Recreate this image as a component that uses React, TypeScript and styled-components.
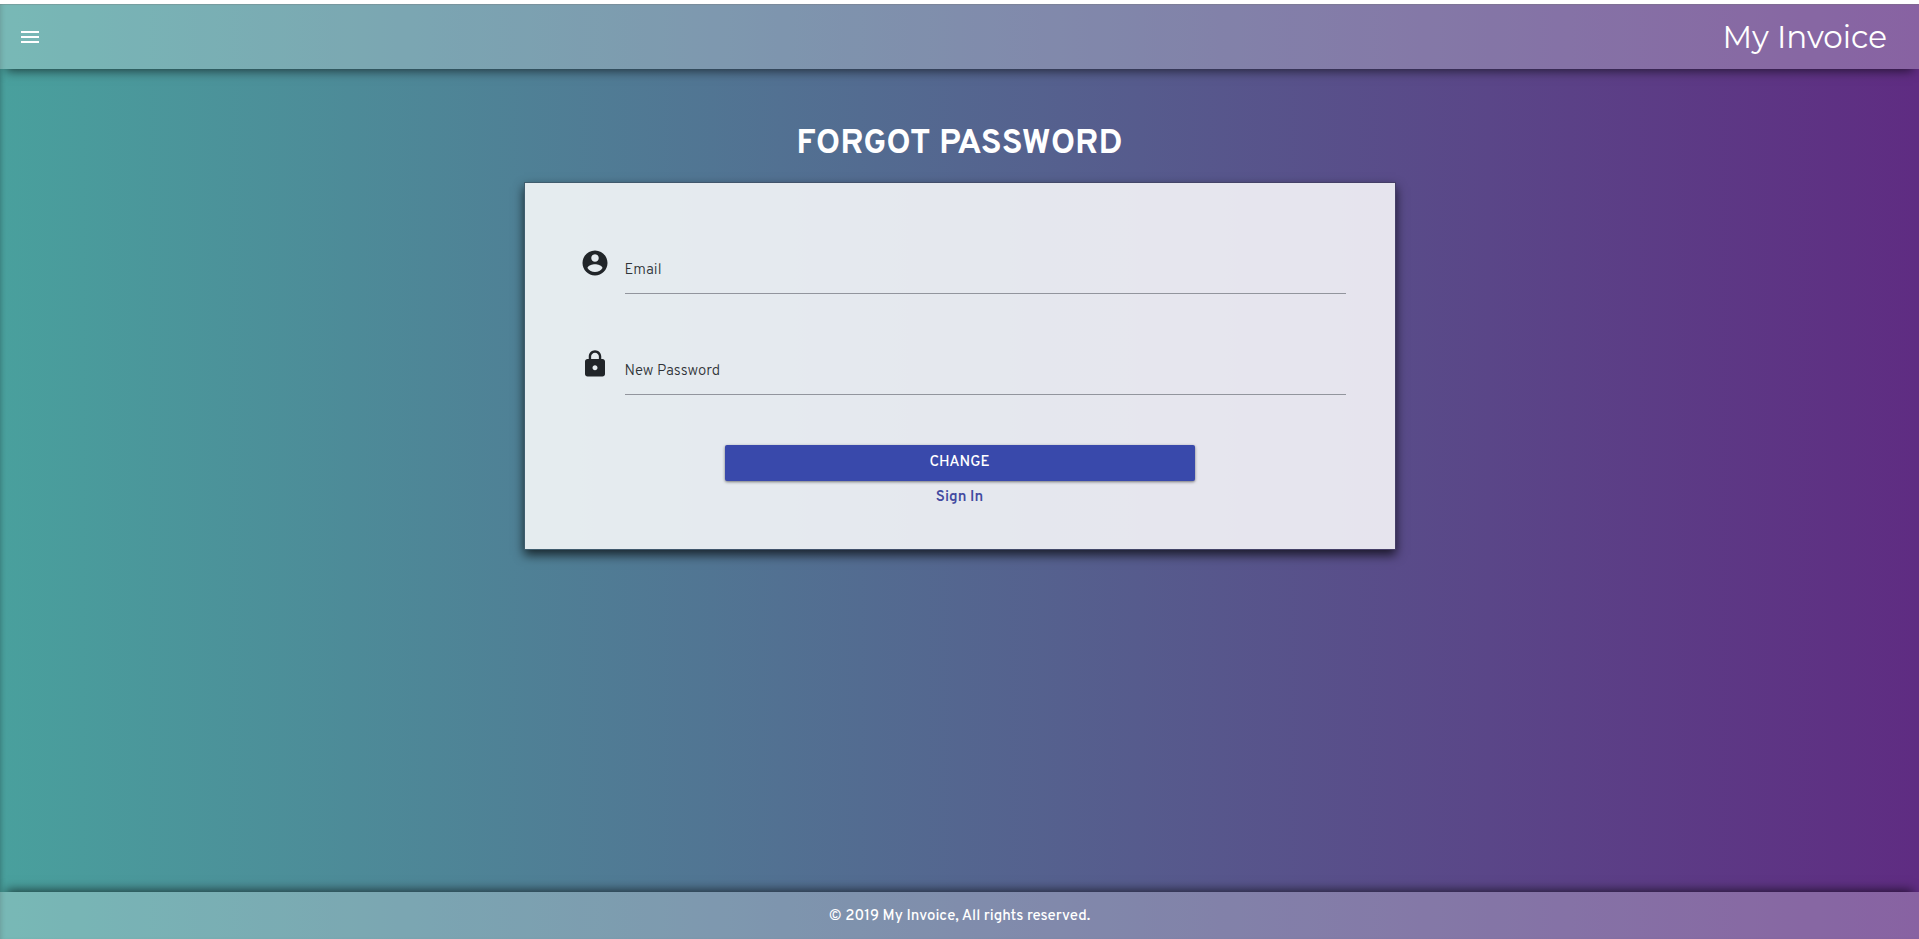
import React from "react";
import styled, { createGlobalStyle } from "styled-components";

const GlobalStyle = createGlobalStyle`
  *, *::before, *::after { box-sizing: border-box; }
  body {
    margin: 0;
    padding-top: 4px;
    background: #fff;
    font-family: "Overpass", Roboto, sans-serif;
    font-size: 15px;
    color: #fff;
  }
`;

const Page = styled.div`
  display: flex;
  flex-direction: column;
  min-height: calc(100vh - 4px);
  background: linear-gradient(to right, #49a09d, #5f2c82);
  box-shadow: inset 4px 0 5px -3px rgba(0, 0, 0, 0.25);
`;

const Header = styled.header`
  display: flex;
  align-items: center;
  justify-content: space-between;
  height: 65px;
  padding: 0 32px 0 18px;
  border-top: 1px solid rgba(120, 120, 120, 0.3);
  background: rgba(255, 255, 255, 0.26);
  box-shadow: 0 8px 10px -6px rgba(0, 0, 0, 0.6);
`;

const MenuButton = styled.button`
  display: flex;
  padding: 0;
  border: 0;
  background: none;
  color: inherit;
  cursor: pointer;
`;

const Brand = styled.a`
  font-family: "Montserrat", Inter, sans-serif;
  font-size: 31px;
  line-height: 40px;
  color: inherit;
  text-decoration: none;
`;

const Main = styled.main`
  flex: 1;
  display: flex;
  flex-direction: column;
  align-items: center;
  padding: 52px 16px 48px;
`;

const Title = styled.h1`
  margin: 0 0 13px;
  font-size: 34px;
  line-height: 48px;
  font-weight: 700;
  text-transform: uppercase;
`;

const Card = styled.form`
  display: flex;
  flex-direction: column;
  width: 100%;
  max-width: 872px;
  padding: 54px 49px 38px;
  border: 1px solid rgba(40, 40, 50, 0.4);
  background: rgba(255, 255, 255, 0.85);
  background-clip: padding-box;
  box-shadow: 0 5px 10px rgba(0, 0, 0, 0.7);
  color: #212529;
`;

const FieldRow = styled.div`
  display: flex;
  gap: 15px;
  margin-bottom: 44px;
  padding-left: 6px;
`;

const FieldIcon = styled.svg`
  flex: none;
  margin-top: 11px;
`;

const Field = styled.div`
  flex: 1;
  display: grid;
  height: 57px;
  border-bottom: 1px solid #92959d;
`;

const FieldLabel = styled.label`
  grid-area: 1 / 1;
  padding-top: 24px;
  line-height: 20px;
  font-weight: 300;
  color: #2f3337;
  pointer-events: none;
`;

const FieldInput = styled.input`
  grid-area: 1 / 1;
  width: 100%;
  padding: 24px 0 12px;
  border: 0;
  outline: 0;
  background: none;
  font: inherit;
  color: inherit;

  &:focus,
  &:not(:placeholder-shown) {
    background: rgba(255, 255, 255, 0.9);
  }
`;

const Actions = styled.div`
  display: flex;
  flex-direction: column;
  align-items: center;
  padding-top: 6px;
`;

const SubmitButton = styled.button`
  width: 100%;
  max-width: 470px;
  height: 36px;
  padding: 0 0 2px;
  border: 0;
  border-radius: 2px;
  background: #3949ab;
  box-shadow: 0 1px 3px rgba(0, 0, 0, 0.5);
  font: inherit;
  font-weight: 500;
  color: #fff;
  text-transform: uppercase;
  cursor: pointer;
`;

const SignInLink = styled.a`
  padding-top: 4px;
  line-height: 26px;
  font-weight: 600;
  color: #434aa0;
  text-decoration: none;
`;

const Footer = styled.footer`
  height: 47px;
  padding-top: 2px;
  line-height: 45px;
  background: rgba(255, 255, 255, 0.26);
  box-shadow: 0 -8px 10px -6px rgba(0, 0, 0, 0.6);
  font-weight: 500;
  text-align: center;
`;

const icons = {
  menu: "M3 18h18v-2H3v2zm0-5h18v-2H3v2zm0-7v2h18V6H3z",
  account:
    "M12 2C6.48 2 2 6.48 2 12s4.48 10 10 10 10-4.48 10-10S17.52 2 12 2zm0 3c1.66 0 3 1.34 3 3s-1.34 3-3 3-3-1.34-3-3 1.34-3 3-3zm0 14.2c-2.5 0-4.71-1.28-6-3.22.03-1.99 4-3.08 6-3.08 1.99 0 5.97 1.09 6 3.08-1.29 1.94-3.5 3.22-6 3.22z",
  lock:
    "M18 8h-1V6c0-2.76-2.24-5-5-5S7 3.24 7 6v2H6c-1.1 0-2 .9-2 2v10c0 1.1.9 2 2 2h12c1.1 0 2-.9 2-2V10c0-1.1-.9-2-2-2zm-6 9c-1.1 0-2-.9-2-2s.9-2 2-2 2 .9 2 2-.9 2-2 2zm3.1-9H8.9V6c0-1.71 1.39-3.1 3.1-3.1 1.71 0 3.1 1.39 3.1 3.1v2z",
};

interface TextFieldProps {
  id: string;
  label: string;
  type: string;
  icon: keyof typeof icons;
}

function TextField({ id, label, type, icon }: TextFieldProps) {
  return (
    <FieldRow>
      <FieldIcon width="30" height="30" viewBox="0 0 24 24" fill="currentColor" aria-hidden="true">
        <path d={icons[icon]} />
      </FieldIcon>
      <Field>
        <FieldLabel htmlFor={id}>{label}</FieldLabel>
        <FieldInput id={id} type={type} placeholder=" " />
      </Field>
    </FieldRow>
  );
}

export default function App() {
  return (
    <>
      <GlobalStyle />
      <Page>
        <Header>
          <MenuButton type="button" aria-label="Menu">
            <svg width="24" height="24" viewBox="0 0 24 24" fill="currentColor" aria-hidden="true">
              <path d={icons.menu} />
            </svg>
          </MenuButton>
          <Brand href="#">My Invoice</Brand>
        </Header>
        <Main>
          <Title>Forgot Password</Title>
          <Card onSubmit={(event) => event.preventDefault()}>
            <TextField id="email" label="Email" type="email" icon="account" />
            <TextField id="new-password" label="New Password" type="password" icon="lock" />
            <Actions>
              <SubmitButton type="submit">Change</SubmitButton>
              <SignInLink href="#">Sign In</SignInLink>
            </Actions>
          </Card>
        </Main>
        <Footer>© 2019 My Invoice, All rights reserved.</Footer>
      </Page>
    </>
  );
}
